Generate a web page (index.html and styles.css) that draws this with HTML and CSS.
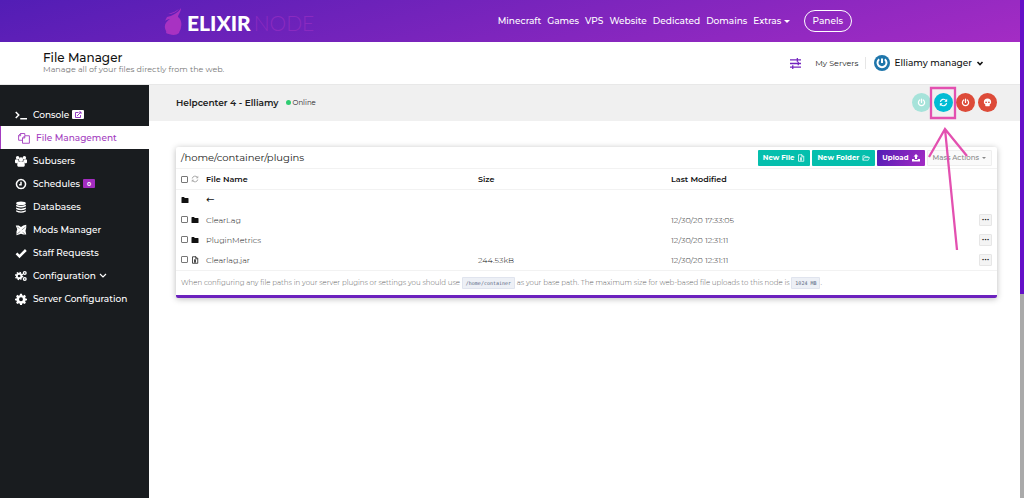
FILE: index.html
```html
<!DOCTYPE html>
<html lang="en">
<head>
<meta charset="utf-8">
<title>File Manager</title>
<link rel="stylesheet" href="styles.css">
</head>
<body>
<svg class="sprite" aria-hidden="true">
  <symbol id="i-folder" viewBox="0 0 16 16"><path d="M1 3q0-1 1-1h4q1 0 1 1v1h7q1 0 1 1v8q0 1-1 1H2q-1 0-1-1z"/></symbol>
  <symbol id="i-power" viewBox="0 0 16 16"><path d="M8 2v6M4.800 3.600a5.500 5.500 0 1 0 6.400 0" fill="none" stroke="currentColor" stroke-width="2.200" stroke-linecap="round"/></symbol>
  <symbol id="i-sync" viewBox="0 0 16 16"><path d="M2.500 7a5.600 5.600 0 0 1 10-2.500M13.500 9a5.600 5.600 0 0 1-10 2.500" fill="none" stroke="currentColor" stroke-width="2"/><path d="M14.500 1.500v5h-5zM1.500 14.500v-5h5z"/></symbol>
  <symbol id="i-doc" viewBox="0 0 16 16"><path d="M3 1.500h7l3.500 3.500v9.500H3zM9.500 1.500v4h4" fill="none" stroke="currentColor" stroke-width="1.500"/><path d="M6 7h4v2H9v2h1v2H6v-2h1V9H6z"/></symbol>
  <symbol id="i-gear" viewBox="0 0 16 16"><path fill-rule="evenodd" d="M6.700 1h2.600l.4 2 1.300.5 1.700-1.100 1.900 1.900L13.500 6l.5 1.300 2 .3v2l-2 .4-.5 1.300 1.100 1.700-1.900 1.700-1.700-1.100-1.300.5-.4 1.900H6.700l-.4-1.900-1.300-.5-1.700 1.100-1.900-1.700 1.100-1.700L2 10l-2-.4v-2l2-.3L2.500 6 1.400 4.300l1.900-1.900L5 3.500 6.300 3zM8 5.800a2.600 2.600 0 1 0 0 5.200 2.600 2.600 0 0 0 0-5.200z"/></symbol>
</svg>
<header class="topbar">
  <a class="logo" href="#">
    <svg class="flame" viewBox="0 0 18 27"><path d="M3 9C8 8 14 5 17 0c0 4-3 7-3 9 3 2 4 6 3 10 0 3-2 4-2 6-3 3-9 2-13 0 1-2-1-3-1-5-1-4 2-7 5-9-2 0-4 1-5 2z"/><path d="M4 6Q10 5 15 1q-4 5-11 5z"/></svg>
    <span class="logo-text"><b>ELIXIR</b><span class="logo-thin">NODE</span></span>
  </a>
  <nav class="topnav">
    <a href="#">Minecraft</a><a href="#">Games</a><a href="#">VPS</a><a href="#">Website</a><a href="#">Dedicated</a><a href="#">Domains</a><a href="#">Extras <i class="caret"></i></a>
    <a class="pill" href="#">Panels</a>
  </nav>
</header>
<div class="titlebar">
  <div class="heading">
    <h1>File Manager</h1>
    <p>Manage all of your files directly from the web.</p>
  </div>
  <div class="account">
    <svg class="sliders" viewBox="0 0 12 12"><path d="M0 2h12M0 6h12M0 10h12M8 0v4M9 4v4M3 8v4" fill="none" stroke="currentColor" stroke-width="1.400"/></svg>
    <a class="servers" href="#">My Servers</a>
    <button class="user" type="button">
      <svg class="avatar" viewBox="0 0 16 16"><circle cx="8" cy="8" r="8" fill="#1f76ab"/><path d="M8 3.500V8M5.200 4.200a4.500 4.500 0 1 0 5.600 0" fill="none" stroke="#fff" stroke-width="2"/></svg>
      <span>Elliamy manager</span>
      <svg class="chev" viewBox="0 0 8 8"><path d="M1.500 3 4 5.500 6.500 3" fill="none" stroke="currentColor" stroke-width="1.600"/></svg>
    </button>
  </div>
</div>
<div class="shell">
  <nav class="sidebar">
    <a href="#"><svg viewBox="0 0 16 16"><path d="M1 4l4 4-4 4M7 13h9" fill="none" stroke="currentColor" stroke-width="2"/></svg>Console <span class="tag light"><svg viewBox="0 0 16 16"><path d="M13 8v5H3V3h6M6 10l8-8M10 2h4v4" fill="none" stroke="currentColor" stroke-width="1.800"/></svg></span></a>
    <a class="active" href="#"><svg viewBox="0 0 16 16"><path d="M6 11H.8V4.500L3.500 2H9v2.500M3.500 2v3H.8M6 8l3-3h6.200v10H6zM9 5v3H6" fill="none" stroke="currentColor" stroke-width="1.200"/></svg>File Management</a>
    <a href="#"><svg viewBox="0 0 16 16"><circle cx="3.500" cy="3.500" r="2.300"/><circle cx="12.500" cy="3.500" r="2.300"/><circle cx="8" cy="6" r="2.900"/><path d="M0 10V7q0-1.500 2-1.500l2.500.5L5 9q-2 1-2 2H1zM16 10V7q0-1.500-2-1.500l-2.500.5L11 9q2 1 2 2h2zM3 14v-2q0-3 3-3.500h4q3 .5 3 3.500v2q0 1.500-1.500 1.500h-7Q3 15.500 3 14z"/></svg>Subusers</a>
    <a href="#"><svg viewBox="0 0 16 16"><path d="M8 2a6 6 0 1 0 .01 0M8 5v4H5.500" fill="none" stroke="currentColor" stroke-width="2"/></svg>Schedules <span class="tag">0</span></a>
    <a href="#"><svg viewBox="0 0 16 16"><ellipse cx="8" cy="3" rx="6.500" ry="2.500"/><path d="M1.500 5q6.500 3 13 0v2q-6.500 3.500-13 0zM1.500 8.700q6.500 3 13 0v2q-6.500 3.500-13 0zM1.500 12.400q6.500 3 13 0V14q-6.500 3.500-13 0z"/></svg>Databases</a>
    <a href="#"><svg viewBox="0 0 16 16"><path d="M1 2l4 0 3 2 3-2 4-1v4l-1 4 1 5-4 0-3-1-6 2V10l1-3z"/><path d="M3 4l3 2M9 8l5-4M3 13l4-3M10 11l3 2" stroke="#191c1f" stroke-width=".6"/></svg>Mods Manager</a>
    <a href="#"><svg viewBox="0 0 16 16"><path d="M2 8.500l4 4L14.500 4" fill="none" stroke="currentColor" stroke-width="3.300"/></svg>Staff Requests</a>
    <a href="#"><svg viewBox="0 0 16 16"><g fill="none" stroke="currentColor"><circle cx="5.500" cy="8" r="3" stroke-width="2.400"/><circle cx="5.500" cy="8" r="4.700" stroke-width="1.800" stroke-dasharray="1.900 1.790"/><circle cx="13" cy="4" r="1.800" stroke-width="1.800"/><circle cx="13" cy="12" r="1.800" stroke-width="1.800"/></g></svg>Configuration <svg class="chev" viewBox="0 0 8 8"><path d="M1 2 4 5 7 2" fill="none" stroke="currentColor" stroke-width="1.200"/></svg></a>
    <a href="#"><svg viewBox="0 0 16 16"><use href="#i-gear"/></svg>Server Configuration</a>
  </nav>
  <main class="main">
    <section class="serverbar">
      <h2>Helpcenter 4 - Elliamy</h2>
      <span class="status">Online</span>
      <div class="power">
        <button class="start" type="button" aria-label="Start" disabled><svg><use href="#i-power"/></svg></button>
        <button class="restart" type="button" aria-label="Restart"><svg><use href="#i-sync"/></svg></button>
        <button type="button" aria-label="Stop"><svg><use href="#i-power"/></svg></button>
        <button type="button" aria-label="Kill"><svg viewBox="0 0 16 16"><path fill-rule="evenodd" d="M8 1c4 0 6.500 2.500 6.500 6 0 2-1 3.500-2.500 4v2.500q0 1-1 1H5q-1 0-1-1V11C2.500 10.500 1.500 9 1.500 7c0-3.500 2.500-6 6.500-6zM5.500 6a1.500 1.500 0 1 0 .01 3 1.500 1.500 0 0 0 0-3zm5 0a1.500 1.500 0 1 0 .01 3 1.500 1.500 0 0 0 0-3z"/></svg></button>
        <svg class="annotation" viewBox="0 0 42 166"><path d="M3 2h24v30H3zM29 164 17 43M1 71 17 43l22 27" fill="none" stroke="#e350b0" stroke-width="2.300"/></svg>
      </div>
    </section>
    <section class="card">
      <div class="card-head">
        <h3>/home/container/plugins</h3>
        <div class="actions">
          <button class="btn" type="button">New File <svg><use href="#i-doc"/></svg></button>
          <button class="btn" type="button">New Folder <svg viewBox="0 0 18 16"><path d="M2 13V3h5l1 2h6v2M2 13l3-6h12l-3 6z" fill="none" stroke="currentColor" stroke-width="1.500"/></svg></button>
          <button class="btn upload" type="button">Upload <svg viewBox="0 0 16 16"><path d="M8 0l5 5h-3v5H6V5H3zM0 10h4.500v2h7v-2H16v5H0z"/></svg></button>
          <button class="btn mass" type="button" disabled>Mass Actions <i class="caret"></i></button>
        </div>
      </div>
      <table>
        <thead>
          <tr><th class="pick"><div class="picks"><input type="checkbox" aria-label="Select all"><svg class="reload"><use href="#i-sync"/></svg></div></th><th class="name">File Name</th><th class="size">Size</th><th>Last Modified</th><th class="more"></th></tr>
        </thead>
        <tbody>
          <tr><td><div class="picks"><svg><use href="#i-folder"/></svg></div></td><td><a class="back" href="#">←</a></td><td></td><td></td><td></td></tr>
          <tr><td><div class="picks"><input type="checkbox" aria-label="Select ClearLag"><svg><use href="#i-folder"/></svg></div></td><td><a href="#">ClearLag</a></td><td></td><td>12/30/20 17:33:05</td><td><button class="dots" type="button" aria-label="More">•••</button></td></tr>
          <tr><td><div class="picks"><input type="checkbox" aria-label="Select PluginMetrics"><svg><use href="#i-folder"/></svg></div></td><td><a href="#">PluginMetrics</a></td><td></td><td>12/30/20 12:31:11</td><td><button class="dots" type="button" aria-label="More">•••</button></td></tr>
          <tr><td><div class="picks"><input type="checkbox" aria-label="Select Clearlag.jar"><svg><use href="#i-doc"/></svg></div></td><td>Clearlag.jar</td><td>244.53kB</td><td>12/30/20 12:31:11</td><td><button class="dots" type="button" aria-label="More">•••</button></td></tr>
        </tbody>
      </table>
      <p class="note">When configuring any file paths in your server plugins or settings you should use <code>/home/container</code> as your base path. The maximum size for web-based file uploads to this node is <code>1024 MB</code>.</p>
    </section>
  </main>
</div>
<div class="scrollbar"><div class="thumb"></div></div>
</body>
</html>
```
FILE: styles.css
```css
* { box-sizing: border-box; }
body { margin: 0; padding-right: 4px; min-height: 100vh; display: flex; flex-direction: column; background: #fff; color: #222; font: 9px/12px Montserrat, Inter, sans-serif; }
a { color: inherit; text-decoration: none; }
button { font: inherit; color: inherit; border: 0; padding: 0; background: none; }
h1, h2, h3, p { margin: 0; font-weight: 500; }
svg { width: 8px; height: 8px; fill: currentColor; flex: none; }
.sprite { position: absolute; width: 0; height: 0; }
.caret { display: inline-block; border: 3px solid transparent; border-top-color: currentColor; border-bottom: 0; vertical-align: middle; }

.topbar { display: flex; align-items: center; justify-content: space-between; height: 42px; padding: 0 168px 0 164px; background: linear-gradient(165deg, #521db5, #a42cc4); color: #fff; }
.logo { display: flex; align-items: center; gap: 5px; }
.flame { width: 18px; height: 27px; fill: #a832c2; }
.logo-text { display: flex; gap: 3px; padding-top: 3px; font: 21px/24px Lato, sans-serif; }
.logo-text b { font-weight: 900; }
.logo-thin { color: #8a2ac0; font-weight: 300; }
.topnav { display: flex; align-items: center; gap: 6px; font-weight: 500; }
.pill { margin-left: 8px; padding: 3px 8px; border: 1px solid #fff; border-radius: 12px; line-height: 14px; }

.titlebar { display: flex; align-items: center; justify-content: space-between; height: 43px; padding: 0 36px 0 43px; border-bottom: 1px solid #e8e8e8; }
.heading { padding-bottom: 2px; }
.heading h1 { font-size: 12px; line-height: 14px; color: #111; }
.heading p { font-size: 8px; line-height: 8px; font-weight: 400; color: #777; }
.account { display: flex; align-items: center; }
.sliders { width: 11px; height: 11px; margin-right: 14px; color: #7424bf; }
.servers { padding-right: 7px; border-right: 1px solid #e6e6e6; font-size: 8px; }
.user { display: flex; align-items: center; gap: 4px; padding-left: 8px; color: #111; font-weight: 500; }
.avatar { width: 16px; height: 16px; }

.shell { flex: 1; display: flex; }
.sidebar { width: 149px; flex: none; padding-top: 18px; background: #191c1f; color: #fff; font-weight: 500; }
.sidebar a { display: flex; align-items: center; gap: 3px; height: 23px; padding-left: 15px; }
.sidebar a > svg:first-child { width: 12px; height: 12px; margin-right: 3px; }
.sidebar .active { background: #fff; color: #a33cc0; border-left: 1px solid #a33cc0; padding-left: 17px; }
.tag { display: flex; align-items: center; justify-content: center; width: 12px; height: 9px; border-radius: 1px; background: #a32cc0; font-size: 6px; font-weight: 700; }
.light { background: #fff; color: #8a2ac0; }

.main { flex: 1; min-width: 0; }
.serverbar { display: flex; align-items: center; height: 36px; padding: 0 23px 1px 27px; background: #f0f0f0; }
.serverbar h2 { font-size: 9px; font-weight: 600; color: #222; }
.status { display: flex; align-items: center; gap: 2px; margin-left: 7px; font-size: 7px; }
.status::before { content: ""; width: 5px; height: 5px; border-radius: 50%; background: #2ecc71; }
.power { position: relative; display: flex; gap: 3px; margin-left: auto; }
.power button { display: flex; align-items: center; justify-content: center; width: 19px; height: 19px; border-radius: 50%; background: #dd4b39; color: #fff; }
.power button svg { width: 9px; height: 9px; }
.power .start { background: #a6e3da; }
.power .restart { background: #00bcd4; }
.annotation { position: absolute; left: 16px; top: -7px; z-index: 1; width: 42px; height: 166px; pointer-events: none; }

.card { margin: 26px 23px 0 27px; border-bottom: 3px solid #6c22bd; border-radius: 2px; box-shadow: 0 1px 6px #0004; }
.card-head { display: flex; align-items: center; justify-content: space-between; height: 21px; padding: 0 5px; }
.card h3 { font-size: 10px; font-weight: 400; }
.actions { display: flex; gap: 2px; }
.btn { display: flex; align-items: center; gap: 3px; height: 16px; padding: 0 5px; border-radius: 1px; background: #05bfad; color: #fff; font-size: 7px; font-weight: 700; }
.upload { background: linear-gradient(120deg, #521db5, #a42cc4); }
.mass { border: 1px solid #eee; background: #fafafa; color: #888; font-weight: 500; }
.mass .caret { border-width: 2px 2px 0; }
table { width: 100%; border-collapse: collapse; table-layout: fixed; color: #111; font-size: 8px; }
th, td { padding: 0 5px; text-align: left; height: 20px; font-weight: 300; }
th { height: 21px; border: solid #f2f2f2; border-width: 1px 0; font-weight: 600; }
.pick { width: 25px; }
.name { width: 272px; }
.size { width: 193px; }
.more { width: 24px; }
.back { font: 10px/12px "DejaVu Sans", sans-serif; }
.picks { display: flex; align-items: center; gap: 3px; color: #111; }
.picks input { appearance: none; flex: none; width: 7px; height: 7px; margin: 0; border: 1px solid #777; border-radius: 1px; background: #fff; }
.reload { color: #aaa; }
.dots { display: block; margin-left: auto; width: 13px; height: 12px; border: 1px solid #e6e6e6; border-radius: 1px; background: #f4f4f4; font: 700 4px/10px "DejaVu Sans", sans-serif; }
.note { padding: 6px 5px; border-top: 1px solid #f2f2f2; color: #666; font-size: 7px; font-weight: 300; }
code { padding: 2px 3px; border: 1px solid #e0e4ee; border-radius: 1px; background: #edf0f6; color: #596780; font: 5px "DejaVu Sans Mono", monospace; }
.scrollbar { position: fixed; top: 0; right: 0; bottom: 0; width: 4px; background: #aaa; }
.thumb { height: 59%; background: #6410c8; }
```
